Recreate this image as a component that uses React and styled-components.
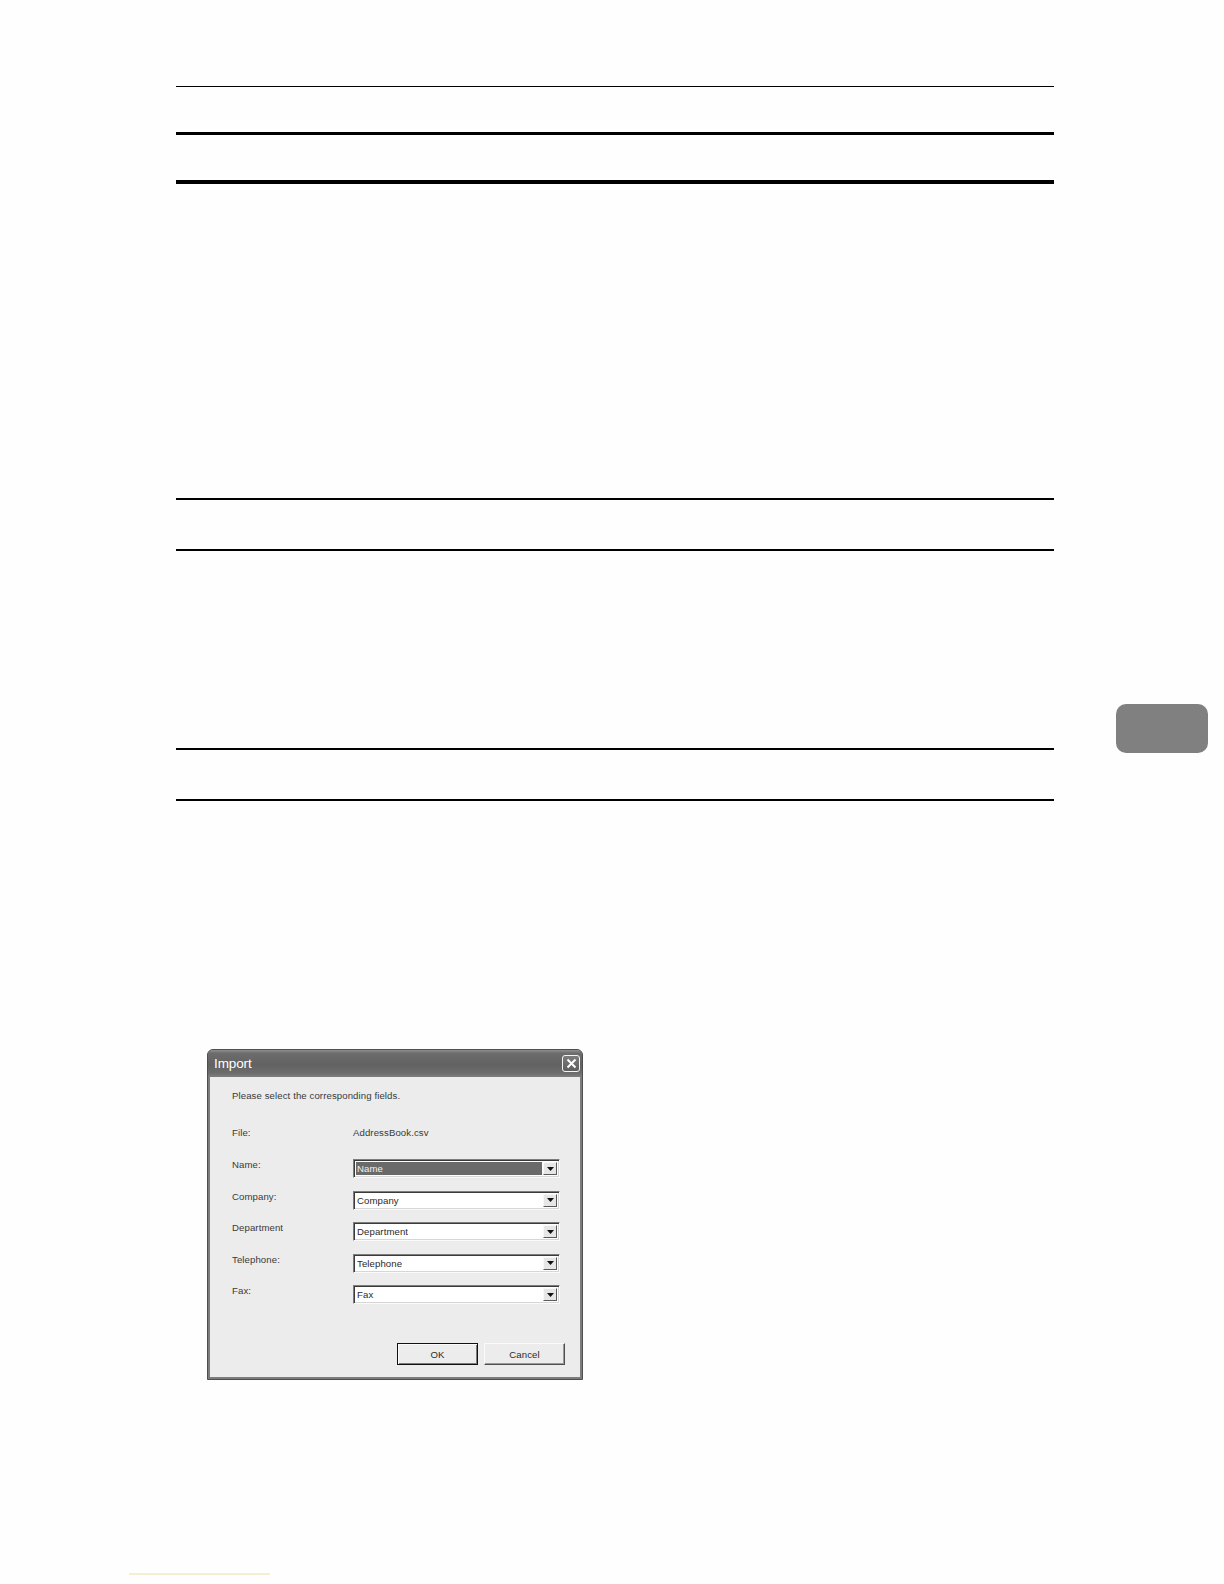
import React from "react";
import styled, { createGlobalStyle } from "styled-components";

const Global = createGlobalStyle`
  html, body { margin: 0; padding: 0; background: #ffffff; }
  body { font-family: "Liberation Sans", Arial, sans-serif; }
`;

const Page = styled.div`
  width: 1224px;
  height: 1584px;
  display: flex;
  flex-direction: column;
  background: #fefefe;
  overflow: hidden;
`;

const Main = styled.div`
  display: flex;
  flex-direction: row;
`;

const Content = styled.div`
  margin-left: 176px;
  width: 878px;
  padding-top: 86px;
  display: flex;
  flex-direction: column;
`;

const Rule = styled.div`
  height: ${(p) => p.$h}px;
  margin-top: ${(p) => p.$mt || 0}px;
  background: #000;
  width: 100%;
`;

const Aside = styled.div`
  margin-left: 62px;
  padding-top: 704px;
`;

const ThumbTab = styled.div`
  width: 92px;
  height: 49px;
  background: #808080;
  border-radius: 10px;
`;

const Footer = styled.div`
  margin-top: auto;
  margin-bottom: 9px;
  padding-left: 129px;
`;

const FootLine = styled.div`
  width: 141px;
  height: 2px;
  background: #f3efd2;
`;

const Dialog = styled.div`
  margin-top: 248px;
  margin-left: 31px;
  width: 376px;
  height: 331px;
  box-sizing: border-box;
  display: flex;
  flex-direction: column;
  background: #7c7c7c;
  border: 1px solid #4e4e4e;
  border-radius: 6px 6px 0 0;
`;

const TitleBar = styled.div`
  height: 27px;
  flex: none;
  display: flex;
  align-items: center;
  justify-content: space-between;
  padding: 0 2px 0 6px;
  border-radius: 5px 5px 0 0;
  background: linear-gradient(#909090 0%, #6c6c6c 12%, #626262 55%, #6c6c6c 85%, #7e7e7e 100%);
`;

const Title = styled.span`
  color: #fff;
  font-family: "Liberation Sans", Arial, sans-serif;
  font-size: 13.5px;
  letter-spacing: -0.1px;
`;

const CloseBtn = styled.div`
  width: 16px;
  height: 15px;
  border: 1px solid #f4f4f4;
  border-radius: 3px;
  background: linear-gradient(#7c7c7c, #5e5e5e);
  display: flex;
  align-items: center;
  justify-content: center;
`;

const Body = styled.div`
  flex: 1;
  margin: 0 2px 2px 2px;
  background: #ececec;
  padding: 12px 0 0 22px;
  display: flex;
  flex-direction: column;
  color: #3a3a3a;
  font-family: "Liberation Sans", Arial, sans-serif;
  font-size: 9.6px;
  letter-spacing: 0.1px;
`;

const Intro = styled.div`
  height: 14px;
  line-height: 14px;
`;

const FileRow = styled.div`
  margin-top: 23px;
  display: grid;
  grid-template-columns: 121px 1fr;
  height: 14px;
  line-height: 14px;
`;

const Fields = styled.div`
  margin-top: 19px;
  display: flex;
  flex-direction: column;
  gap: 12.5px;
`;

const FieldRow = styled.div`
  display: grid;
  grid-template-columns: 121px 207px;
  align-items: start;
  height: 19px;
`;

const Label = styled.div`
  line-height: 12px;
`;

const Select = styled.div`
  height: 19px;
  box-sizing: border-box;
  display: flex;
  background: #fff;
  border-top: 1px solid #7c7c7c;
  border-left: 1px solid #7c7c7c;
  border-right: 1px solid #fafafa;
  border-bottom: 1px solid #fafafa;
  box-shadow: inset 1px 1px 0 #3a3a3a, inset -1px -1px 0 #d6d6d6;
  padding: 2px;
`;

const Value = styled.div`
  flex: 1;
  line-height: 13px;
  padding-left: 1px;
  color: ${(p) => (p.$active ? "#f2f2f2" : "#2a2a2a")};
  background: ${(p) => (p.$active ? "#6a6a6a" : "transparent")};
  margin-right: 1px;
`;

const Arrow = styled.div`
  width: 14px;
  height: 13px;
  box-sizing: border-box;
  background: #e6e6e6;
  border-top: 1px solid #f8f8f8;
  border-left: 1px solid #f8f8f8;
  border-right: 1px solid #5a5a5a;
  border-bottom: 1px solid #5a5a5a;
  display: flex;
  align-items: center;
  justify-content: center;
`;

const Buttons = styled.div`
  margin-top: auto;
  margin-bottom: 12px;
  display: flex;
  gap: 6px;
  padding-left: 165px;
`;

const Button = styled.div`
  width: 81px;
  height: 22px;
  box-sizing: border-box;
  background: #ececec;
  display: flex;
  align-items: center;
  justify-content: center;
  color: #2a2a2a;
  border: 1px solid ${(p) => (p.$default ? "#111" : "#505050")};
  ${(p) => (p.$default ? "" : "border-top-color: #fafafa; border-left-color: #fafafa;")}
  box-shadow: ${(p) =>
    p.$default
      ? "inset 1px 1px 0 #fafafa, inset -1px -1px 0 #7a7a7a"
      : "inset -1px -1px 0 #9a9a9a"};
`;

const fields = ["Name", "Company", "Department", "Telephone", "Fax"];
const labels = ["Name:", "Company:", "Department", "Telephone:", "Fax:"];

const Tri = () => (
  <svg width="7" height="4" viewBox="0 0 7 4">
    <path d="M0 0 H7 L3.5 4 Z" fill="#111" />
  </svg>
);

export default function App() {
  return (
    <>
      <Global />
      <Page>
        <Main>
          <Content>
            <Rule $h={1} />
            <Rule $h={3} $mt={45} />
            <Rule $h={4} $mt={45} />
            <Rule $h={2} $mt={314} />
            <Rule $h={2} $mt={49} />
            <Rule $h={2} $mt={197} />
            <Rule $h={2} $mt={49} />
            <Dialog>
              <TitleBar>
                <Title>Import</Title>
                <CloseBtn>
                  <svg width="11" height="11" viewBox="0 0 11 11">
                    <path d="M1.5 1.5 L9.5 9.5 M9.5 1.5 L1.5 9.5" stroke="#fff" strokeWidth="2" />
                  </svg>
                </CloseBtn>
              </TitleBar>
              <Body>
                <Intro>Please select the corresponding fields.</Intro>
                <FileRow>
                  <span>File:</span>
                  <span>AddressBook.csv</span>
                </FileRow>
                <Fields>
                  {fields.map((f, i) => (
                    <FieldRow key={f}>
                      <Label>{labels[i]}</Label>
                      <Select>
                        <Value $active={i === 0}>{f}</Value>
                        <Arrow>
                          <Tri />
                        </Arrow>
                      </Select>
                    </FieldRow>
                  ))}
                </Fields>
                <Buttons>
                  <Button $default>OK</Button>
                  <Button>Cancel</Button>
                </Buttons>
              </Body>
            </Dialog>
          </Content>
          <Aside>
            <ThumbTab />
          </Aside>
        </Main>
        <Footer>
          <FootLine />
        </Footer>
      </Page>
    </>
  );
}
